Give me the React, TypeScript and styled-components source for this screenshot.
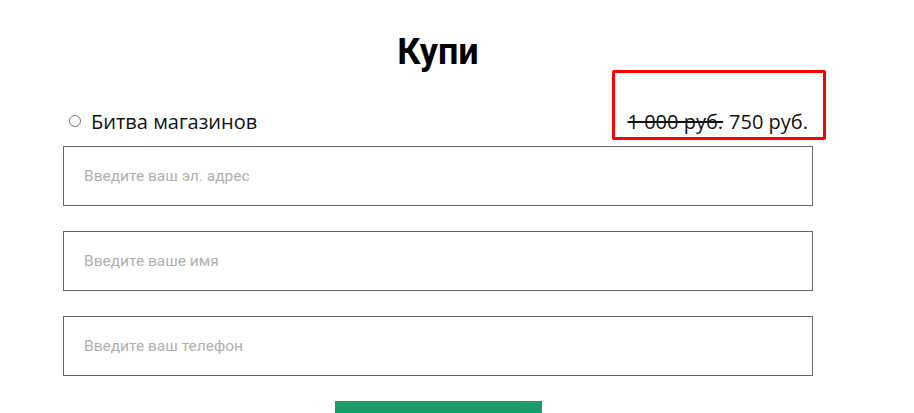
import React from "react";
import styled, { createGlobalStyle } from "styled-components";

const Global = createGlobalStyle`
  html, body { margin: 0; padding: 0; background: #fff; }
  body { font-family: "Open Sans", "Liberation Sans", sans-serif; overflow: hidden; }
`;

const Page = styled.div`
  position: relative;
  width: 914px;
  height: 413px;
  overflow: hidden;
  padding: 0 0 0 63px;
  box-sizing: border-box;
`;

const Form = styled.div`
  width: 750px;
  display: flex;
  flex-direction: column;
`;

const Title = styled.h1`
  margin: 30px 0 0;
  text-align: center;
  font-family: Roboto, "Liberation Sans", sans-serif;
  font-weight: 700;
  font-size: 36px;
  line-height: 44px;
  color: #000;
`;

const ProductRow = styled.label`
  margin: 31px 0 9px;
  height: 32px;
  display: flex;
  align-items: center;
  justify-content: space-between;
  padding: 0 5px 0 6px;
  font-size: 20px;
  color: #111;
`;

const Option = styled.span`
  display: flex;
  align-items: center;
  gap: 10px;
`;

const Radio = styled.span`
  width: 10px;
  height: 10px;
  border: 1px solid #777;
  border-radius: 50%;
`;

const Price = styled.span`
  display: flex;
  gap: 6px;
`;

const OldPrice = styled.s`
  text-decoration-thickness: 2px;
  color: #111;
`;

const Input = styled.input`
  box-sizing: border-box;
  width: 750px;
  height: 60px;
  border: 1px solid #666;
  padding: 0 20px;
  margin: 0 0 25px;
  font-family: Roboto, "Liberation Sans", sans-serif;
  font-size: 15.5px;
  outline: none;
  &::placeholder { color: #b0b0b0; }
`;

const Submit = styled.button`
  align-self: center;
  width: 207px;
  height: 40px;
  border: none;
  background: #1a9b68;
`;

const Highlight = styled.div`
  position: absolute;
  left: 612px;
  top: 70px;
  width: 214px;
  height: 70px;
  box-sizing: border-box;
  border: 3px solid #ff0000;
  border-radius: 2px;
  pointer-events: none;
`;

export default function App() {
  return (
    <>
      <Global />
      <Page>
        <Form>
          <Title>Купи</Title>
          <ProductRow>
            <Option>
              <Radio />
              Битва магазинов
            </Option>
            <Price>
              <OldPrice>1 000 руб.</OldPrice>
              <span>750 руб.</span>
            </Price>
          </ProductRow>
          <Input placeholder="Введите ваш эл. адрес" />
          <Input placeholder="Введите ваше имя" />
          <Input placeholder="Введите ваш телефон" />
          <Submit />
        </Form>
        <Highlight />
      </Page>
    </>
  );
}
